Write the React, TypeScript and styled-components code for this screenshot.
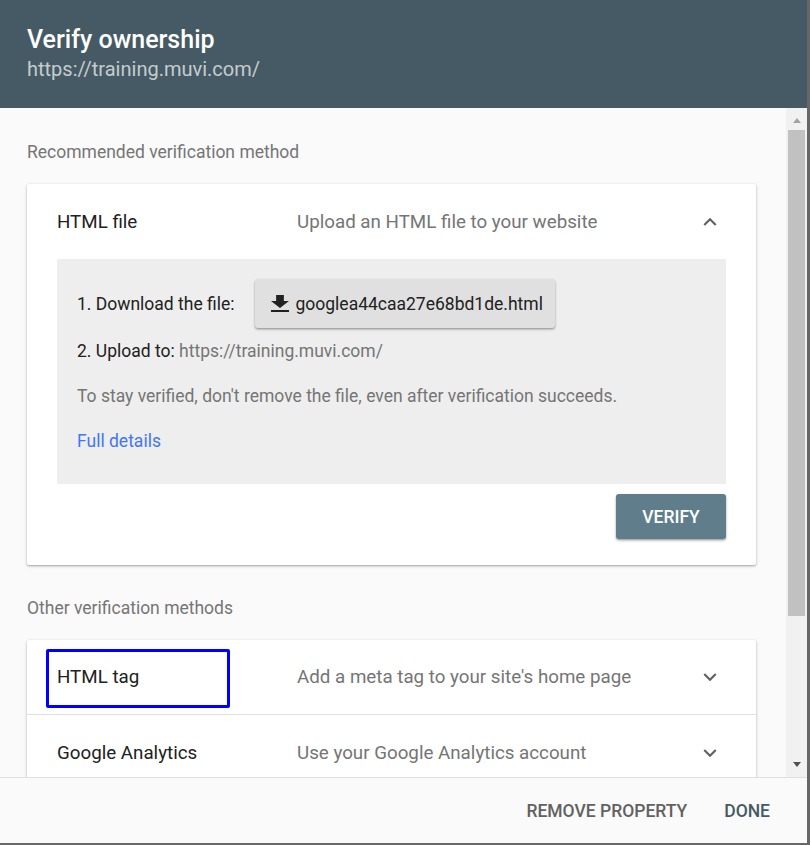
import React from "react";
import styled, { createGlobalStyle } from "styled-components";

const Global = createGlobalStyle`
  html, body {
    margin: 0;
    padding: 0;
    background: #676767;
  }
  * { box-sizing: border-box; }
  body {
    font-family: Roboto, "Noto Sans", Arial, sans-serif;
    -webkit-font-smoothing: antialiased;
  }
`;

const Dialog = styled.div`
  width: 807px;
  height: 843px;
  background: #fafafa;
  display: flex;
  flex-direction: column;
  overflow: hidden;
`;

const Header = styled.header`
  height: 108px;
  flex: 0 0 108px;
  background: #455a64;
  padding: 0 27px;
  display: flex;
  flex-direction: column;
  justify-content: center;
`;

const Title = styled.h1`
  margin: 0;
  font-size: 25px;
  line-height: 30px;
  font-weight: 500;
  color: #ffffff;
`;

const Subtitle = styled.div`
  font-size: 20px;
  line-height: 28px;
  color: rgba(255, 255, 255, 0.7);
`;

const Content = styled.div`
  flex: 1 1 auto;
  min-height: 0;
  display: flex;
`;

const Scroller = styled.main`
  flex: 1 1 auto;
  min-width: 0;
  overflow: hidden;
  padding: 32px 30px 32px 27px;
`;

const ScrollBar = styled.div`
  flex: 0 0 21px;
  width: 21px;
  background: #f1f1f1;
  display: flex;
  flex-direction: column;
`;

const ArrowButton = styled.div<{ $down?: boolean }>`
  flex: 0 0 21px;
  height: 21px;
  display: flex;
  justify-content: center;
  padding-top: ${(p) => (p.$down ? 6 : 10)}px;

  &::before {
    content: "";
    width: 0;
    height: 0;
    border-left: 4.5px solid transparent;
    border-right: 4.5px solid transparent;
    ${(p) =>
      p.$down
        ? "border-top: 5px solid #505050;"
        : "border-bottom: 5px solid #a3a3a3;"}
  }
`;

const ThumbTrack = styled.div`
  flex: 1 1 auto;
  padding: 1px 2px 0;
`;

const Thumb = styled.div`
  width: 100%;
  background: #c1c1c1;
`;

const SectionLabel = styled.div<{ $top?: number }>`
  margin: ${(p) => p.$top ?? 0}px 0 20px;
  font-size: 17.5px;
  line-height: 24px;
  color: #757575;
`;

const Card = styled.section`
  background: #ffffff;
  border-radius: 2px;
  box-shadow: 0 1px 2px rgba(0, 0, 0, 0.28), 0 1px 4px rgba(0, 0, 0, 0.12);
`;

const MethodRow = styled.div<{ $divider?: boolean }>`
  position: relative;
  height: 75px;
  padding: 0 33px 0 30px;
  display: grid;
  grid-template-columns: 240px 1fr auto;
  align-items: center;
  border-bottom: ${(p) => (p.$divider ? "1px solid #e0e0e0" : "none")};
`;

const MethodName = styled.div`
  font-size: 18.75px;
  color: #212121;
`;

const MethodDesc = styled.div`
  font-size: 18.75px;
  color: #757575;
`;

const Chevron = styled.svg`
  width: 26px;
  height: 26px;
  fill: #616161;
  display: block;
`;

const Highlight = styled.div`
  position: absolute;
  left: 19px;
  top: 9px;
  width: 184px;
  height: 59px;
  border: 3px solid #0000ff;
  border-radius: 2px;
  pointer-events: none;
`;

const Panel = styled.div`
  margin: 0 30px;
  background: #eeeeee;
  padding: 20px 20px 31px;
  display: flex;
  flex-direction: column;
`;

const StepRow = styled.div`
  display: flex;
  align-items: center;
  gap: 20px;
  height: 49px;
  font-size: 17.5px;
`;

const Line = styled.div<{ $space: number }>`
  margin-top: ${(p) => p.$space}px;
  font-size: 17.5px;
  line-height: 24px;
  color: #757575;
`;

const Strong = styled.span`
  color: #212121;
`;

const FileButton = styled.button`
  height: 49px;
  padding: 0 12px 0 16px;
  display: flex;
  align-items: center;
  gap: 7px;
  border: none;
  border-radius: 3px;
  background: #e0e0e0;
  box-shadow: 0 1px 2px rgba(0, 0, 0, 0.3), 0 2px 3px rgba(0, 0, 0, 0.12);
  font-family: Roboto, "Noto Sans", Arial, sans-serif;
  font-size: 17.5px;
  color: #212121;
  cursor: pointer;
`;

const DownloadIcon = styled.svg`
  width: 18px;
  height: 17px;
  fill: #212121;
  display: block;
`;

const Link = styled.a`
  color: #4276f5;
  text-decoration: none;
`;

const Actions = styled.div`
  display: flex;
  justify-content: flex-end;
  padding: 10px 30px 26px;
`;

const VerifyButton = styled.button`
  width: 110px;
  height: 45px;
  border: none;
  border-radius: 3px;
  background: #607d8b;
  color: #ffffff;
  font-family: Roboto, "Noto Sans", Arial, sans-serif;
  font-size: 17.5px;
  font-weight: 500;
  box-shadow: 0 1px 2px rgba(0, 0, 0, 0.3), 0 2px 3px rgba(0, 0, 0, 0.15);
  cursor: pointer;
`;

const Footer = styled.footer`
  flex: 0 0 66px;
  height: 66px;
  border-top: 1px solid #e0e0e0;
  background: #fafafa;
  display: flex;
  align-items: center;
  justify-content: flex-end;
  gap: 17px;
  padding: 0 27px 0 0;
`;

const TextButton = styled.button<{ $primary?: boolean }>`
  border: none;
  background: transparent;
  padding: 0 10px;
  height: 40px;
  font-family: Roboto, "Noto Sans", Arial, sans-serif;
  font-size: 17.5px;
  font-weight: 500;
  color: ${(p) => (p.$primary ? "#455a64" : "#616161")};
  cursor: pointer;
`;

const ExpandIcon = ({ up }: { up?: boolean }) => (
  <Chevron viewBox="0 0 24 24" aria-hidden>
    {up ? (
      <path d="M12 8l-6 6 1.41 1.41L12 10.83l4.59 4.58L18 14z" />
    ) : (
      <path d="M16.59 8.59L12 13.17 7.41 8.59 6 10l6 6 6-6z" />
    )}
  </Chevron>
);

const otherMethods = [
  { name: "HTML tag", desc: "Add a meta tag to your site's home page", highlight: true },
  { name: "Google Analytics", desc: "Use your Google Analytics account" },
];

// length of the scroll thumb (visible part of the scrolling content)
const thumbHeight = 486;

export default function App() {
  return (
    <>
      <Global />
      <Dialog>
        <Header>
          <Title>Verify ownership</Title>
          <Subtitle>https://training.muvi.com/</Subtitle>
        </Header>
        <Content>
          <Scroller>
            <SectionLabel>Recommended verification method</SectionLabel>
            <Card>
              <MethodRow>
                <MethodName>HTML file</MethodName>
                <MethodDesc>Upload an HTML file to your website</MethodDesc>
                <ExpandIcon up />
              </MethodRow>
              <Panel>
                <StepRow>
                  <Strong>1. Download the file:</Strong>
                  <FileButton>
                    <DownloadIcon viewBox="5 3 14 17" preserveAspectRatio="none" aria-hidden>
                      <path d="M19 9h-4V3H9v6H5l7 7 7-7zM5 18v2h14v-2H5z" />
                    </DownloadIcon>
                    googlea44caa27e68bd1de.html
                  </FileButton>
                </StepRow>
                <Line $space={11}>
                  <Strong>2. Upload to:</Strong> https://training.muvi.com/
                </Line>
                <Line $space={21}>
                  To stay verified, don't remove the file, even after verification succeeds.
                </Line>
                <Line $space={21}>
                  <Link href="#">Full details</Link>
                </Line>
              </Panel>
              <Actions>
                <VerifyButton>VERIFY</VerifyButton>
              </Actions>
            </Card>
            <SectionLabel $top={31}>Other verification methods</SectionLabel>
            <Card>
              {otherMethods.map((m, i) => (
                <MethodRow key={m.name} $divider={i < otherMethods.length - 1}>
                  {m.highlight && <Highlight />}
                  <MethodName>{m.name}</MethodName>
                  <MethodDesc>{m.desc}</MethodDesc>
                  <ExpandIcon />
                </MethodRow>
              ))}
            </Card>
          </Scroller>
          <ScrollBar aria-hidden>
            <ArrowButton />
            <ThumbTrack>
              <Thumb style={{ height: thumbHeight }} />
            </ThumbTrack>
            <ArrowButton $down />
          </ScrollBar>
        </Content>
        <Footer>
          <TextButton>REMOVE PROPERTY</TextButton>
          <TextButton $primary>DONE</TextButton>
        </Footer>
      </Dialog>
    </>
  );
}
